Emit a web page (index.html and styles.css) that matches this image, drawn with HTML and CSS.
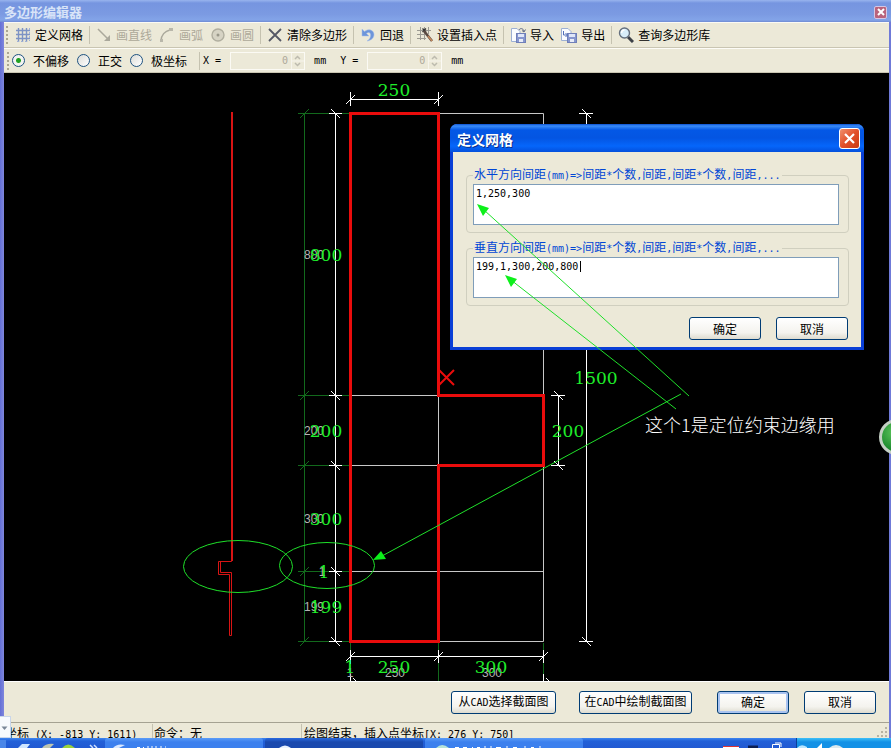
FILE: index.html
```html
<!DOCTYPE html>
<html lang="zh-CN">
<head>
<meta charset="utf-8">
<title>多边形编辑器</title>
<link rel="stylesheet" href="styles.css">
</head>
<body>
<div class="screen">
<main class="window">
  <header class="titlebar">
    <h1>多边形编辑器</h1>
    <button class="close close-small" aria-label="关闭"><svg width="8" height="8" viewBox="0 0 8 8"><path d="M1 1L7 7M7 1L1 7" stroke="#fff" stroke-width="2"/></svg></button>
  </header>

  <div class="bar tools">
    <span class="grip"></span>
    <button class="tool"><svg class="icon" viewBox="0 0 16 16"><path d="M3.500 1V15M7.500 1V15M11.500 1V15M1 3.500H15M1 7.500H15M1 11.500H15" stroke="#7d93c4" stroke-width="1.400" fill="none"/><path d="M14.500 1V14M2 14.500H14" stroke="#9fb0d6" stroke-dasharray="2 2" fill="none"/></svg>定义网格</button>
    <span class="sep"></span>
    <button class="tool" disabled><svg class="icon" viewBox="0 0 16 16"><path d="M2 2L12 12" stroke="#aaa89b" stroke-width="1.500"/><path d="M14 8V14H8z" fill="#aaa89b"/></svg>画直线</button>
    <button class="tool" disabled><svg class="icon" viewBox="0 0 16 16"><path d="M2 14C2 8 6 4 11 3" stroke="#aaa89b" stroke-width="1.500" fill="none"/><rect x="1" y="12" width="3" height="3" fill="#b9b7aa"/><rect x="10" y="1" width="4" height="3" fill="#b9b7aa"/></svg>画弧</button>
    <button class="tool" disabled><svg class="icon" viewBox="0 0 16 16"><circle cx="8" cy="8" r="6" fill="#d6d3c4" stroke="#b0ae9f" stroke-width="1.400"/><circle cx="8" cy="8" r="1.500" fill="#999789"/></svg>画圆</button>
    <span class="sep"></span>
    <button class="tool"><svg class="icon" viewBox="0 0 16 16"><path d="M2 2L14 14M14 2L2 14" stroke="#555865" stroke-width="1.800"/></svg>清除多边形</button>
    <span class="sep"></span>
    <button class="tool"><svg class="icon" viewBox="0 0 16 16"><path d="M2 2V9H9L6.500 6.500C9 4.500 11 6 10.500 9C10.300 11 9 13 7 14C11 13.500 14 11 14 7.500C14 3.500 9 1 4.500 4.500z" fill="#6d95da" stroke="#a6bfea" stroke-width=".5"/></svg>回退</button>
    <span class="sep"></span>
    <button class="tool"><svg class="icon" viewBox="0 0 16 16"><path d="M3.500 0V13M7.500 0V13M11.500 0V7M0 3.500H14M0 7.500H8M0 11.500H9" stroke="#9b9a92" fill="none"/><path d="M5.500 1.500L9 5M9 1.500L5.500 5" stroke="#333" stroke-width="1.300"/><path d="M7 4L15 14" stroke="#5a4a42" stroke-width="2.600"/><path d="M11 9L15 14" stroke="#c58a5e" stroke-width="1.600"/></svg>设置插入点</button>
    <span class="sep"></span>
    <button class="tool"><svg class="icon" viewBox="0 0 16 16"><path d="M1.500 1.500H7L10 4.500V14.500H1.500z" fill="#fafcff" stroke="#9db0d4"/><rect x="6.500" y="6.500" width="9" height="9" fill="#8797cf" stroke="#6f7fb8"/><rect x="8" y="7" width="6" height="3" fill="#dfe6f8"/><rect x="9" y="12" width="4" height="3" fill="#e8ecf8"/><path d="M9 3C10 1 13 1 14 4M12 3.500L14 5L15.500 2.500" stroke="#5b6683" fill="none"/></svg>导入</button>
    <button class="tool"><svg class="icon" viewBox="0 0 16 16"><path d="M.5 1.500H7L10 4.500V13.500H.5z" fill="#fafcff" stroke="#9db0d4"/><rect x="6.500" y="6.500" width="9" height="9" fill="#8797cf" stroke="#6f7fb8"/><rect x="8" y="7" width="6" height="3" fill="#dfe6f8"/><rect x="9" y="12" width="4" height="3" fill="#e8ecf8"/><path d="M2.500 4V8H6M4.500 6L6.500 8L4.500 10" stroke="#5470b8" fill="none"/></svg>导出</button>
    <span class="sep"></span>
    <button class="tool"><svg class="icon" viewBox="0 0 16 16"><path d="M10 10L15 15" stroke="#3d4148" stroke-width="3"/><circle cx="6.500" cy="6" r="5" fill="#d9eefa" stroke="#646f7e" stroke-width="1.400"/><path d="M3.500 6A3 3 0 0 1 6.500 3" stroke="#fff" stroke-width="1.500" fill="none"/></svg>查询多边形库</button>
  </div>

  <form class="bar options">
    <span class="grip"></span>
    <label class="mode"><input type="radio" name="mode" checked>不偏移</label>
    <label class="mode"><input type="radio" name="mode">正交</label>
    <label class="mode"><input type="radio" name="mode">极坐标</label>
    <span class="sep sep-wide"></span>
    <label class="latin" for="x">X =</label>
    <span class="spin"><input id="x" type="text" value="0" disabled><svg width="13" height="16" viewBox="0 0 13 16"><path d="M.5 0V16M.5 8H13" stroke="#f6f4ec"/><path d="M4 6L6.500 3.500L9 6M4 10L6.500 12.500L9 10" stroke="#bdbbae" stroke-width="1.500" fill="none"/></svg></span>
    <span class="latin unit">mm</span>
    <label class="latin" for="y">Y =</label>
    <span class="spin"><input id="y" type="text" value="0" disabled><svg width="13" height="16" viewBox="0 0 13 16"><path d="M.5 0V16M.5 8H13" stroke="#f6f4ec"/><path d="M4 6L6.500 3.500L9 6M4 10L6.500 12.500L9 10" stroke="#bdbbae" stroke-width="1.500" fill="none"/></svg></span>
    <span class="latin unit">mm</span>
  </form>

  <section class="canvas">
    <svg class="drawing" width="885" height="608" viewBox="4 73 885 608">
      <g class="guide">
        <path d="M304.500 113V641M298 113.500H349M298 395.500H349M298 465.500H349M298 571.500H349M298 641.500H349M438.500 643V681M543.500 643V681M350.500 643V681"/>
        <path d="M300 118L309 109M300 400L309 391M300 470L309 461M300 576L309 567M300 646L309 637"/>
      </g>
      <path class="grid" d="M440 113.500H543.500V641.500H440M350 395.500H438.500V465.500H350M350 571.500H543"/>
      <g class="dim">
        <path d="M335.500 113V641M329 113.500H342M329 395.500H342M329 465.500H342M329 571.500H342M329 641.500H342"/>
        <path d="M331 109L340 118M331 391L340 400M331 461L340 470M331 567L340 576M331 637L340 646"/>
        <path d="M350 99.500H439M350.500 92V106M438.500 92V106M346 104L355 95M434 104L443 95"/>
        <path d="M586.500 113V641M579 113.500H593M579 641.500H593M582 109L591 118M582 637L591 646"/>
        <path d="M558.500 395V465M551 395.500H565M551 465.500H565M554 391L563 400M554 461L563 470"/>
        <path d="M350 656.500H544M350.500 650V664M438.500 650V663M543.500 650V663M346 661L355 652M434 661L443 652M539 661L548 652M350.500 674V681M543.500 674V681M353 678L356 681M546 678L549 681"/>
      </g>
      <path class="thin" d="M231.500 112V561.500H218.500V574.500H229.500V635.500H231.500V572.500H220.500V561.500M232.500 112V561"/>
      <g class="small">
        <text x="314" y="259">800</text><text x="314" y="435">200</text><text x="314" y="523">300</text><text x="322" y="576">1</text><text x="314" y="611">199</text>
        <text x="350" y="677">1</text><text x="395" y="677">250</text><text x="492" y="677">300</text>
      </g>
      <path class="outline" d="M350.500 113.500H438.500V395.500H543.500V465.500H438.500V641.500H350.500z"/>
      <path class="mark" d="M439 370L454 385M454 370L439 385"/>
      <g class="size">
        <text x="394" y="96">250</text><text x="326" y="261">800</text><text x="326" y="437">200</text><text x="326" y="525">300</text><text x="324" y="578">1</text><text x="326" y="613">199</text>
        <text x="350" y="673">1</text><text x="394" y="673">250</text><text x="491" y="673">300</text><text x="568" y="437">200</text><text x="596" y="384">1500</text>
      </g>
      <text class="note" x="645" y="432">这个1是定位约束边缘用</text>
    </svg>

    <form class="dialog" role="dialog" aria-labelledby="grid-title">
      <header class="dialog-title">
        <h2 id="grid-title">定义网格</h2>
        <button type="button" class="close close-large" aria-label="关闭"><svg width="13" height="13" viewBox="0 0 13 13"><path d="M2 2L11 11M11 2L2 11" stroke="#fff" stroke-width="2.200"/></svg></button>
      </header>
      <div class="dialog-body">
        <fieldset>
          <legend><label for="h">水平方向间距<span class="latin">(mm)=&gt;</span>间距<span class="latin">*</span>个数<span class="latin">,</span>间距<span class="latin">,</span>间距<span class="latin">*</span>个数<span class="latin">,</span>间距<span class="latin">,...</span></label></legend>
          <textarea id="h" spellcheck="false">1,250,300</textarea>
        </fieldset>
        <fieldset>
          <legend><label for="v">垂直方向间距<span class="latin">(mm)=&gt;</span>间距<span class="latin">*</span>个数<span class="latin">,</span>间距<span class="latin">,</span>间距<span class="latin">*</span>个数<span class="latin">,</span>间距<span class="latin">,...</span></label></legend>
          <textarea id="v" spellcheck="false">199,1,300,200,800</textarea>
        </fieldset>
        <div class="dialog-actions">
          <button type="button" class="push">确定</button>
          <button type="button" class="push">取消</button>
        </div>
      </div>
    </form>

    <svg class="callouts" width="885" height="608" viewBox="4 73 885 608">
      <path class="caret" d="M580.500 261V272"/>
      <ellipse cx="238" cy="566.500" rx="54.500" ry="26"/>
      <ellipse cx="327" cy="565.500" rx="47.500" ry="23"/>
      <path d="M689 396L484 210M676 409L511 280M681 394L382 556"/>
      <path class="head" d="M477 204L489 208L483 216zM505 275L517 279L511 287zM373 560L381 551L386 559z"/>
    </svg>
  </section>

  <div class="actions">
    <button class="push push-a">从<span class="latin">CAD</span>选择截面图</button>
    <button class="push push-b">在<span class="latin">CAD</span>中绘制截面图</button>
    <button class="push push-default">确定</button>
    <button class="push">取消</button>
  </div>

  <footer class="status">
    <span class="cell">坐标<span class="latin"> (X: -813 Y: 1611)</span></span>
    <span class="cell">命令：无</span>
    <span class="cell cell-fill">绘图结束，插入点坐标<span class="latin">[X: 276 Y: 750]</span></span>
    <svg class="resize" width="12" height="14" viewBox="0 0 12 14"><path d="M8 3h2v2h-2zM4 7h2v2h-2zM8 7h2v2h-2zM0 11h2v2h-2zM4 11h2v2h-2zM8 11h2v2h-2z" fill="#b8b4a2"/></svg>
  </footer>
</main>

<nav class="taskbar">
  <div class="launch">
    <svg width="105" height="10" viewBox="0 0 105 10"><path d="M0 2H6V10H0z" fill="#4a86e8"/><path d="M18 10L22 6H30L27 10z" fill="#cfe6ff"/><path d="M42 10Q46 5 54 6L50 10z" fill="#bfc6b0"/><path d="M62 10Q68 3 75 10z" fill="#9bd33c"/><path d="M90 7L93 10M94 7L97 10" stroke="#cfe0ff" stroke-width="1.500"/></svg>
  </div>
  <div class="task"><svg width="80" height="10" viewBox="0 0 80 10"><path d="M8 10Q12 5 20 7L14 10z" fill="#d9e8ff"/><path d="M32 9.500H35M38 9.500H39M43 8V10M47 8V10M51 8V10M56 8V10M60 9H61" stroke="#fff"/></svg></div>
  <div class="task task-active"><svg width="40" height="10" viewBox="0 0 40 10"><path d="M14 10Q20 5 26 10z" fill="#e9f2ff"/></svg></div>
  <div class="task"><svg width="120" height="10" viewBox="0 0 120 10"><path d="M11 10Q17 4 24 10z" fill="#b9e3d8"/><path d="M30 9.500H34M38 9.500H42M47 9.500H48M52 9.500H55M60 8V10M66 8V10M71 9.500H76M82 8V10M88 9.500H92M100 8V10M106 9.500H109M115 8V10" stroke="#fff"/></svg></div>
  <div class="lang"><svg width="80" height="10" viewBox="0 0 80 10"><path d="M7 8.500H23V10H7z" fill="#fff"/><path d="M7 8.500H23" stroke="#d33"/><path d="M32 9H42" stroke="#0d1f52" stroke-width="3"/><path d="M56.500 10V6.500H63.500V10M59 5H65V9" stroke="#fff" fill="none"/></svg></div>
  <div class="tray"><svg width="60" height="10" viewBox="0 0 60 10"><path d="M0 10Q4 5 10 9V10z" fill="#b9e6ff"/><path d="M20 10L25 5V10z" fill="#fff"/><path d="M32 10Q39 4 46 10z" fill="#dce9ee"/></svg></div>
</nav>

<div class="dropdown"><svg width="10" height="21" viewBox="0 0 10 21"><path d="M1.500 9.500H7.500L4.500 13z" fill="#7a8797"/></svg></div>
<div class="ball"></div>
</div>
</body>
</html>
```

FILE: styles.css
```css
* { box-sizing: border-box; }

body {
  margin: 0;
  font-family: "Noto Sans CJK SC", sans-serif;
  font-size: 12px;
  line-height: 16px;
  color: #000;
  background: #000;
}

button, input, textarea {
  font: inherit;
  color: inherit;
  margin: 0;
  padding: 0;
  border: 0;
}

svg { display: block; }

.latin {
  font-family: "DejaVu Sans Mono", monospace;
  font-size: 10px;
  white-space: pre;
}

.screen {
  position: relative;
  display: flex;
  flex-direction: column;
  min-height: 100vh;
  overflow: hidden;
}

.window {
  flex: 1;
  display: flex;
  flex-direction: column;
  padding: 0 2px 0 4px;
  background: linear-gradient(90deg, #6470d6, #7f86dc 4px, #6f7ad8);
}

.titlebar {
  display: flex;
  align-items: center;
  justify-content: space-between;
  height: 22px;
  margin: 0 -2px 0 -4px;
  padding: 2px 4px 0;
  background: linear-gradient(#98b4ee, #7695e0 3px, #7b9ae2 14px, #83a4e8 20px, #6f8ad2);
}

.titlebar h1 {
  margin: 0;
  font-size: 13px;
  font-weight: bold;
  color: #d8e4f8;
}

.close {
  display: flex;
  align-items: center;
  justify-content: center;
  border: 1px solid #fff;
  border-radius: 3px;
}

.close-small {
  width: 13px;
  height: 13px;
  border-color: #d5c6e4;
  border-radius: 2px;
  background: #b9637c;
}

.close-large {
  width: 21px;
  height: 21px;
  background: linear-gradient(135deg, #f0906e, #e2502a 50%, #c93a12);
}

.bar {
  display: flex;
  align-items: center;
  background: #ece9d8;
}

.tools {
  gap: 1px;
  height: 26px;
  padding-left: 2px;
  border-top: 1px solid #fbfaf4;
  border-bottom: 1px solid #c9c5b2;
}

.options {
  height: 25px;
  padding-left: 3px;
  border-top: 1px solid #fdfcf7;
  border-bottom: 1px solid #c9c5b2;
}

.grip {
  width: 2px;
  height: 18px;
  margin: 0 3px 0 0;
  background: repeating-linear-gradient(#aaa692 0 2px, transparent 2px 4px);
}

.tool {
  display: flex;
  align-items: center;
  gap: 4px;
  padding: 0 3px;
  background: none;
  white-space: nowrap;
}

.tool:disabled { color: #aca899; }

.icon { width: 16px; height: 16px; }

.sep {
  width: 1px;
  height: 18px;
  margin: 0 2px;
  background: #c5c2b0;
}

.sep-wide { margin: 0 3px 0 4px; }

.mode {
  display: flex;
  align-items: center;
  gap: 8px;
  margin-right: 8px;
  white-space: nowrap;
}

.mode input {
  appearance: none;
  width: 13px;
  height: 13px;
  border: 1px solid #1d5281;
  border-radius: 50%;
  background: linear-gradient(135deg, #dcdcd7, #fff);
}

.mode input:checked {
  background: radial-gradient(circle, #21a121 0 2px, #f4f4f1 3px);
}

.spin {
  display: flex;
  align-items: center;
  width: 75px;
  height: 18px;
  margin-left: 9px;
  border: 1px solid #fbfaf4;
}

.spin input {
  flex: 1;
  min-width: 0;
  height: 16px;
  padding-right: 3px;
  text-align: right;
  font-family: "DejaVu Sans Mono", monospace;
  font-size: 10px;
  color: #aca899;
  background: #ece9d8;
}

.unit { margin: 0 14px 0 9px; }

.canvas {
  position: relative;
  flex: 1;
  min-height: 608px;
  overflow: hidden;
  background: #000;
}

.callouts {
  position: absolute;
  left: 0;
  top: 0;
  pointer-events: none;
}

.drawing path { fill: none; stroke-width: 1; }
.drawing .guide path { stroke: #12691c; }
.drawing .grid { stroke: #c8c8c8; }
.drawing .dim path { stroke: #fff; }
.drawing .thin { stroke: #d81414; }
.drawing .outline { stroke: #ea0c0c; stroke-width: 3; }
.drawing .mark { stroke: #ea0c0c; stroke-width: 2; }

.size text {
  font-family: "DejaVu Serif", serif;
  font-size: 17px;
  text-anchor: middle;
  fill: #1fee2b;
}

.small text {
  font-family: "Liberation Sans", sans-serif;
  font-size: 12px;
  text-anchor: middle;
  fill: #b4b4b4;
}

.note { font-size: 18px; font-weight: 300; fill: #fff; }

.callouts path, .callouts ellipse { fill: none; stroke: #1fe02a; }
.callouts .head { fill: #0cf01a; stroke: none; }
.callouts .caret { stroke: #000; }

.dialog {
  position: absolute;
  left: 446px;
  top: 51px;
  width: 414px;
  border: 3px solid #0a3fd6;
  border-top: 0;
  border-radius: 7px 7px 0 0;
  background: #ece9d8;
}

.dialog-title {
  display: flex;
  align-items: center;
  justify-content: space-between;
  height: 28px;
  margin: 0 -3px;
  padding: 1px 4px 0 7px;
  border-radius: 7px 7px 0 0;
  background: linear-gradient(#0a4fd0, #3a8cf8 2px, #0458e6 6px, #0455e2 14px, #0566fb 22px, #0450dc);
}

.dialog-title h2 {
  margin: 0;
  font-size: 14px;
  font-weight: bold;
  color: #fff;
  text-shadow: 1px 1px #0a2f8c;
}

.dialog-body {
  display: flex;
  flex-direction: column;
  gap: 6px;
  padding: 14px 12px 7px 13px;
}

fieldset {
  min-width: 0;
  height: 67px;
  margin: 0;
  padding: 0 9px 0 6px;
  border: 1px solid #d0cfbf;
  border-radius: 4px;
}

legend {
  padding: 0 2px 0 1px;
  color: #0046d5;
  white-space: nowrap;
}

textarea {
  display: block;
  width: 100%;
  height: 41px;
  padding: 1px 2px;
  border: 1px solid #7f9db9;
  background: #fff;
  font-family: "DejaVu Sans Mono", monospace;
  font-size: 10px;
  resize: none;
  overflow: hidden;
}

.dialog-actions {
  display: flex;
  justify-content: flex-end;
  gap: 15px;
  padding: 5px 1px 0 0;
}

.push {
  min-width: 72px;
  height: 23px;
  border: 1px solid #003c74;
  border-radius: 3px;
  background: linear-gradient(#fff, #f4f3ee 70%, #dedbcf);
  white-space: nowrap;
}

.push-a { min-width: 105px; }
.push-b { min-width: 113px; margin: 0 10px 0 8px; }
.push-default { box-shadow: inset 0 0 0 2px #a9c3f0; }

.actions {
  display: flex;
  justify-content: flex-end;
  align-items: center;
  gap: 15px;
  height: 41px;
  padding-right: 13px;
  border-top: 1px solid #fff;
  background: #ece9d8;
}

.status {
  display: flex;
  height: 16px;
  padding-top: 1px;
  border-top: 1px solid #a5a292;
  background: #ece9d8;
  overflow: hidden;
  white-space: nowrap;
}

.cell {
  flex: none;
  width: 149px;
  padding-left: 1px;
  border-right: 1px solid #c5c2b0;
  line-height: 18px;
}

.cell-fill { flex: 1; border-right: 0; padding-left: 2px; }

.taskbar {
  display: flex;
  height: 10px;
  overflow: hidden;
  background: linear-gradient(#3e86f0, #2260d8 3px, #2159d2);
}

.launch { width: 105px; }

.task {
  width: 158px;
  margin-right: 2px;
  border-radius: 3px 3px 0 0;
  background: linear-gradient(#5b9cf8, #3c80ee 4px);
}

.task-active { background: linear-gradient(#2a6ae0, #1a49ae 4px); }

.lang { width: 80px; margin-left: auto; }

.tray {
  width: 95px;
  border-left: 1px solid #0a3f9a;
  background: linear-gradient(#3ec0f8, #1391e6 4px);
}

.dropdown {
  position: absolute;
  left: 0;
  bottom: 10px;
  width: 11px;
  height: 22px;
  border: 1px solid #c9d6ea;
  border-left: 0;
  background: #f7fafd;
}

.ball {
  position: absolute;
  right: -24px;
  top: 419px;
  width: 36px;
  height: 36px;
  border: 3px solid #c4cfc4;
  border-radius: 50%;
  background: radial-gradient(circle at 40% 35%, #5cc45c, #17852a 70%);
}
```
